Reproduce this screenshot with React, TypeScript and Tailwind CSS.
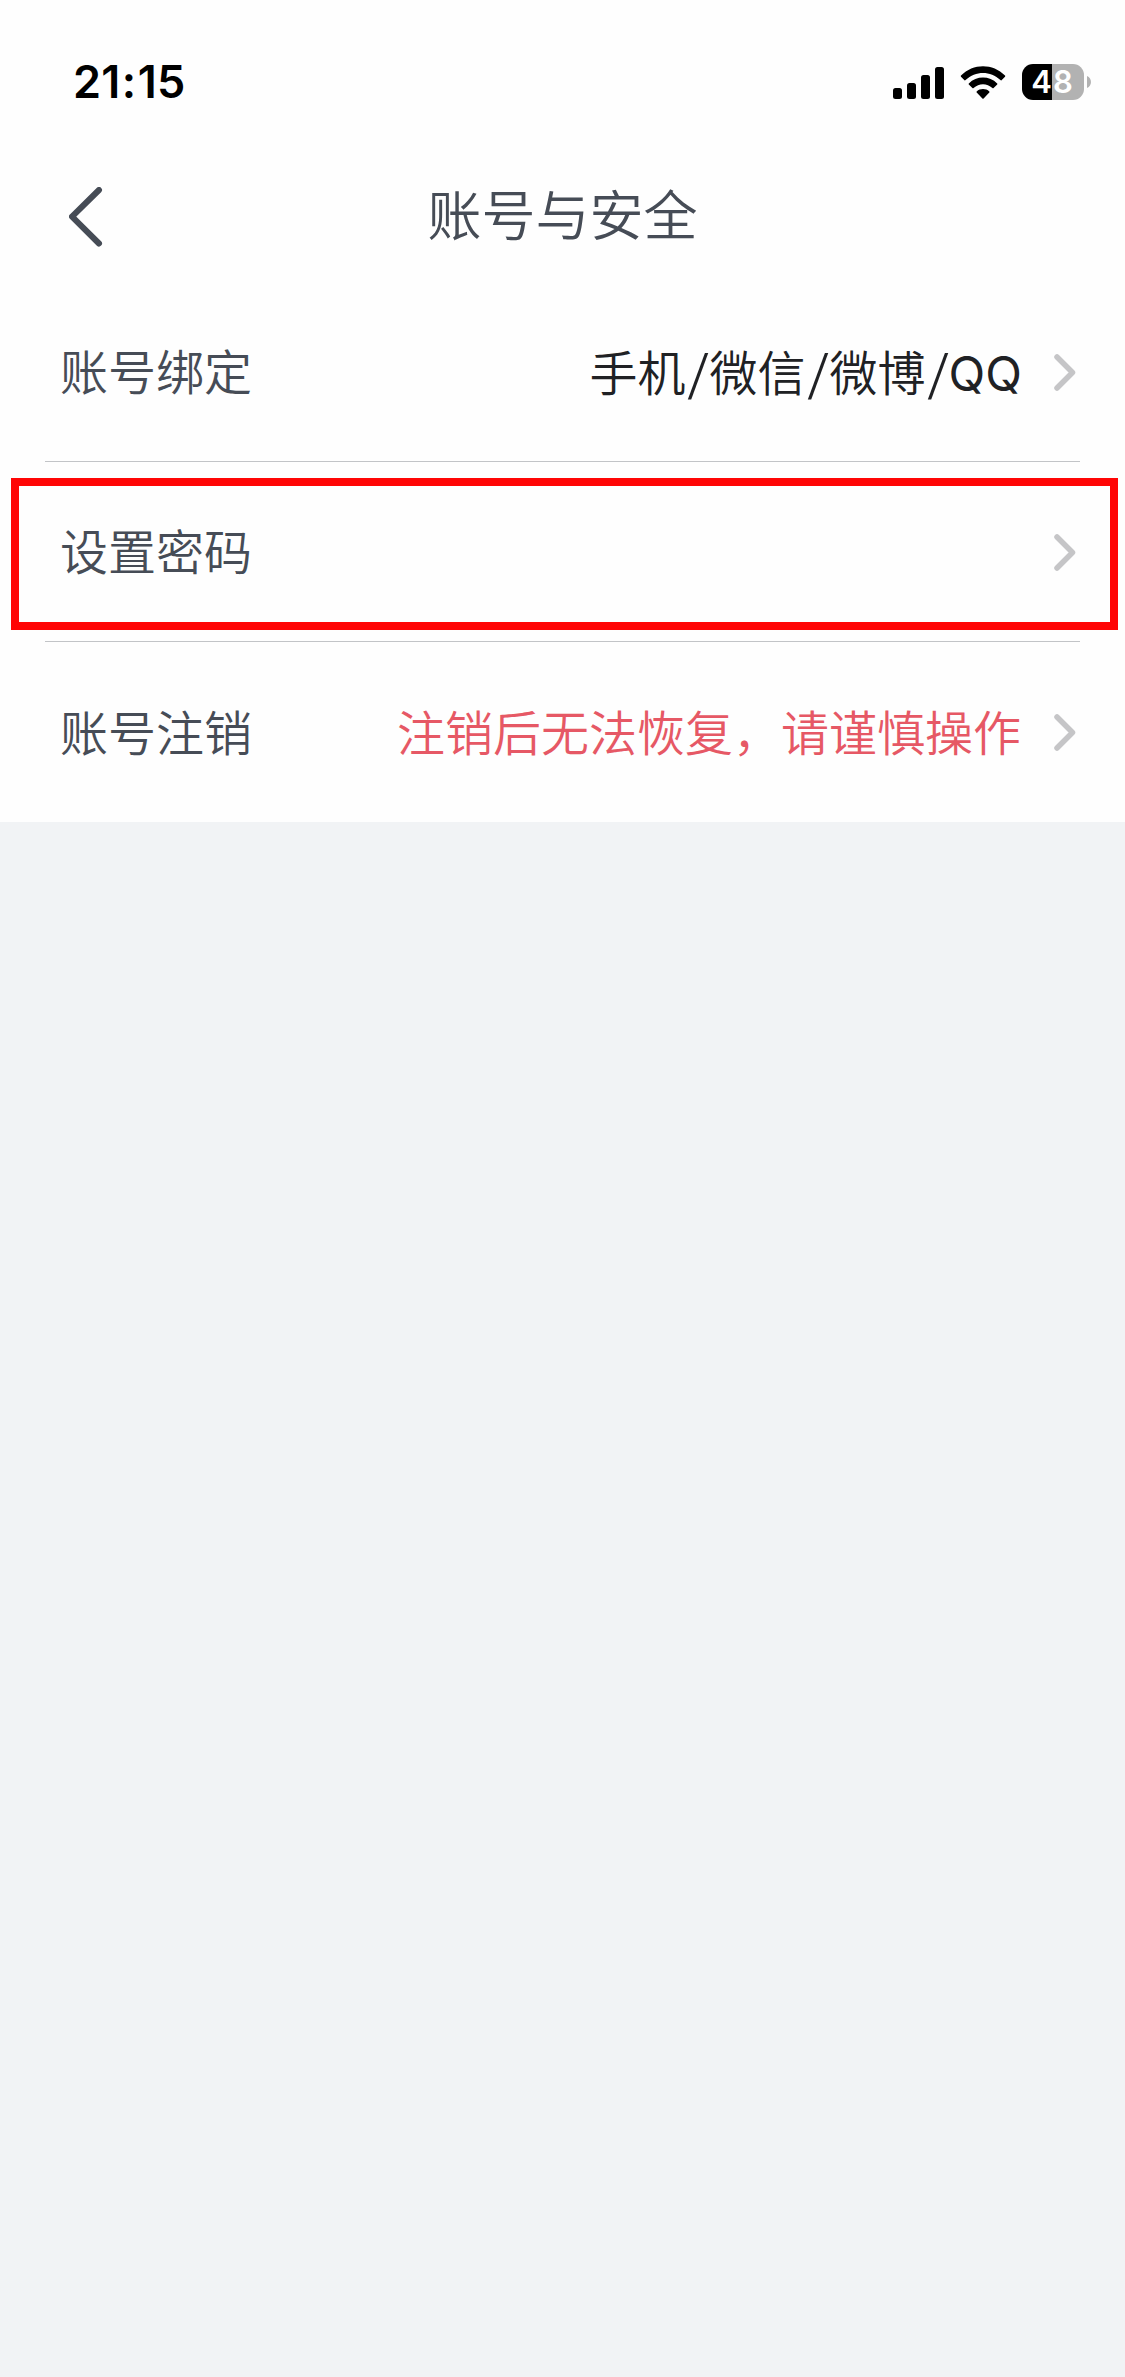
import React from "react";

const Chevron = () => (
  <svg width="22" height="37" viewBox="0 0 22 37" fill="none" className="mt-px shrink-0">
    <path d="M3 3L18.5 18.5L3 34" stroke="#c5c5c7" strokeWidth="5.5" strokeLinecap="round" strokeLinejoin="round" />
  </svg>
);

const StatusBar = () => {
  return (
    <div className="flex h-[162px] items-start justify-between pl-[73px] pr-[34px] pt-[64px] text-black">
      <p className="-mt-px font-['Inter',sans-serif] text-[45px] leading-[37px] font-semibold tracking-[0.3px]">
        21<span className="px-[1.2px]">:</span>15
      </p>
      <div className="flex h-9 items-center">
        <svg width="51" height="32" viewBox="0 0 51 32" className="mt-px">
          <rect x="0" y="21" width="9" height="11" rx="2.5" />
          <rect x="14" y="16" width="9" height="16" rx="2.5" />
          <rect x="28" y="8" width="9" height="24" rx="2.5" />
          <rect x="42" y="0" width="9" height="32" rx="2.5" />
        </svg>
        <svg width="46" height="33" viewBox="0 0 46 33" className="ml-4">
          <path d="M1 9.5C13 -3 33 -3 45 9.5Q45.500 10 45 10.700L41.500 14.200Q41 14.600 40.400 14.100C30.500 4.600 15.500 4.600 5.600 14.100Q5 14.600 4.500 14.200L1 10.700Q0.500 10 1 9.500Z" />
          <path d="M8.800 17.400C16.500 9.600 29.500 9.600 37.200 17.400Q37.700 18 37.200 18.600L33.600 22.100Q33 22.600 32.400 22.100C27 17 19 17 13.600 22.100Q13 22.600 12.400 22.100L8.800 18.600Q8.300 18 8.800 17.400Z" />
          <path d="M16.700 25.400C20 22.200 26 22.200 29.300 25.400Q29.900 26 29.300 26.600L23.600 32.400Q23 33 22.400 32.400L16.700 26.600Q16.100 26 16.700 25.400Z" />
        </svg>
        <div className="ml-4 flex h-9 w-[62px] items-center justify-center rounded-[11px] bg-[linear-gradient(90deg,#000_30px,#b2b2b2_30px)]">
          <span className="pr-px font-['Inter',sans-serif] text-[31px] leading-9 font-semibold tracking-[1px] text-white">48</span>
        </div>
        <svg width="4" height="12" viewBox="0 0 4 12" fill="#b2b2b2" className="ml-[3px]">
          <path d="M0 0C5.300 2 5.300 10 0 12Z" />
        </svg>
      </div>
    </div>
  );
};

const Row = ({ label, children }: { label: string; children?: React.ReactNode }) => (
  <div className="relative flex h-[180px] items-center justify-between border-b border-[#c2c4c7] pl-[15px] pr-[4px] last:border-b-0">
    <p className="mb-[5px] leading-[72px]">{label}</p>
    <div className="flex items-center gap-[33px]">
      {children}
      <Chevron />
    </div>
  </div>
);

const Slash = () => <span className="w-6 scale-x-115 text-center">/</span>;

const App = () => {
  return (
    <div className="min-h-[2377px] w-[1125px] bg-[#f1f3f5] font-['Noto_Sans_CJK_SC',sans-serif] text-[48px] font-[350] text-[#464c56]">
      <div className="h-[822px] bg-[#fefefe]">
        <StatusBar />
        <div className="grid h-[120px] grid-cols-3 items-start pl-[69px] pr-[69px]">
          <svg width="34" height="60" viewBox="0 0 34 60" fill="none" className="mt-[25px]">
            <path d="M30 3L3 29.700L30 56.500" stroke="#464c56" strokeWidth="6" strokeLinecap="round" strokeLinejoin="round" />
          </svg>
          <h1 className="mt-[11px] text-center text-[54px] leading-[80px] font-[350] whitespace-nowrap">账号与安全</h1>
        </div>
        <div className="mx-[45px]">
          <Row label="账号绑定">
            <p className="-mr-px flex leading-[72px] text-[#202124]">
              手机<Slash />微信<Slash />微博<Slash />
              <span className="-ml-px pt-[4px] font-['Inter',sans-serif] text-[48px] font-normal">QQ</span>
            </p>
          </Row>
          <Row label="设置密码">
            <div className="absolute top-4 -left-[34px] h-[152px] w-[1107px] border-8 border-[#ff0505]" />
          </Row>
          <Row label="账号注销">
            <p className="mb-[5px] leading-[72px] text-[#e65865]">注销后无法恢复，请谨慎操作</p>
          </Row>
        </div>
      </div>
    </div>
  );
};

export default App;
